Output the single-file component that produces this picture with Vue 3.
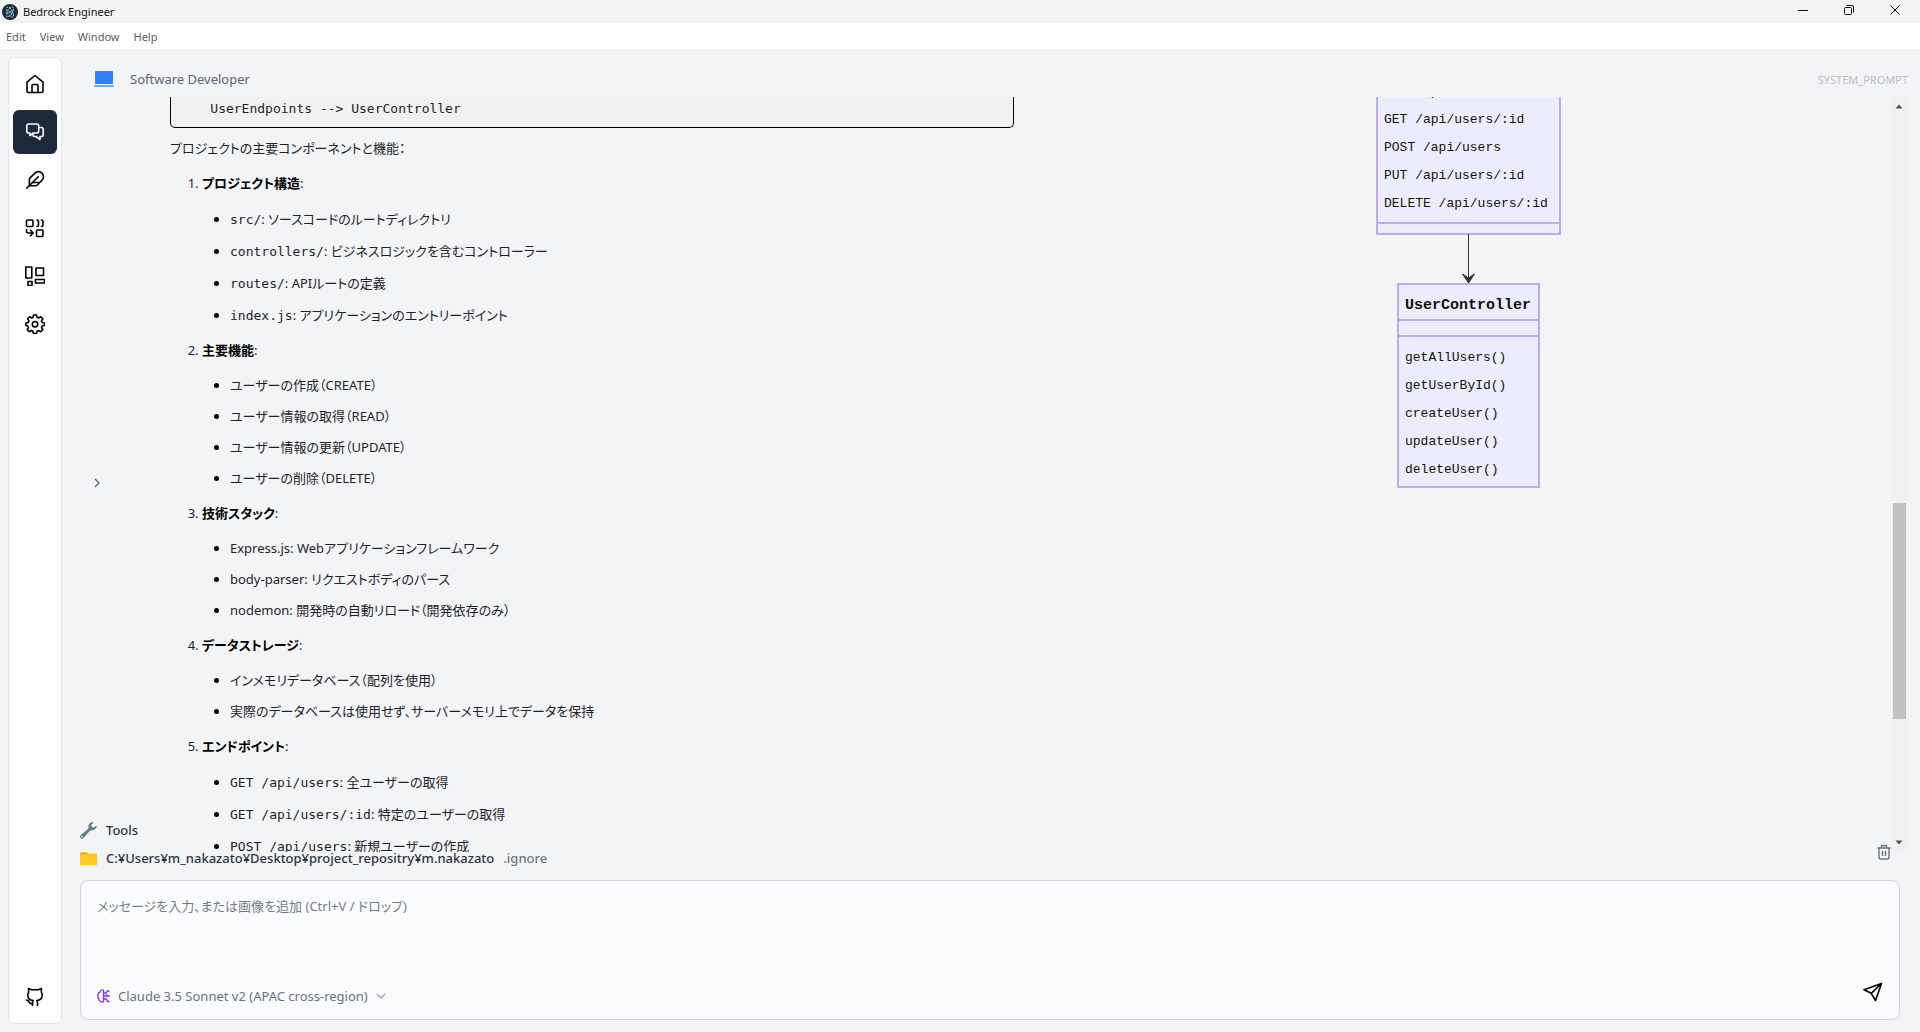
<template>
  <div class="window">
    <!-- title bar -->
    <header class="titlebar">
      <svg class="app-icon" viewBox="0 0 16 16">
        <circle cx="8" cy="8" r="8" fill="#1f2b3a" />
        <g fill="none" stroke="#9fd8e8" stroke-width="1" stroke-dasharray="2 1">
          <ellipse cx="8" cy="8" rx="2.4" ry="5.6" transform="rotate(30 8 8)" />
          <ellipse cx="8" cy="8" rx="2.4" ry="5.6" transform="rotate(-30 8 8)" />
        </g>
        <circle cx="8" cy="8" r="1" fill="#9fd8e8" />
      </svg>
      <span class="app-name">Bedrock Engineer</span>
      <div class="window-buttons">
        <button aria-label="Minimize">
          <svg viewBox="0 0 12 12"><path d="M1 6.5h10" /></svg>
        </button>
        <button aria-label="Restore">
          <svg viewBox="0 0 12 12">
            <rect x="1.5" y="3.5" width="7" height="7" rx="1" />
            <path d="M3.5 1.5h5.5a1.5 1.5 0 0 1 1.5 1.5v5.5" />
          </svg>
        </button>
        <button aria-label="Close">
          <svg viewBox="0 0 12 12"><path d="M1.5 1.5l9 9M10.5 1.5l-9 9" /></svg>
        </button>
      </div>
    </header>

    <nav class="menubar">
      <a v-for="item in menus" :key="item" href="#">{{ item }}</a>
    </nav>

    <div class="body">
      <!-- side navigation -->
      <aside class="sidebar">
        <button
          v-for="item in navItems"
          :key="item.name"
          class="nav-button"
          :class="{ active: item.name === current, last: item.name === 'github' }"
          :aria-label="item.name"
          @click="current = item.name"
        >
          <svg viewBox="0 0 20 20">
            <path v-for="d in item.paths" :key="d" :d="d" />
          </svg>
        </button>
      </aside>

      <main class="main">
        <div class="agent-bar">
          <button class="agent">
            <svg viewBox="0 0 20 16">
              <rect x="1" y="0" width="18" height="13" rx="1" fill="#2b7fff" />
              <rect x="0" y="14" width="20" height="2" rx="1" fill="#6ea6ff" />
            </svg>
            Software Developer
          </button>
          <button class="system-prompt">SYSTEM_PROMPT</button>
        </div>

        <div class="chat">
          <button class="history-toggle" aria-label="History">
            <svg viewBox="0 0 12 12"><path d="M4 2l4 4-4 4" /></svg>
          </button>

          <div class="columns">
            <article class="message">
              <pre><code>    UserEndpoints --&gt; UserController</code></pre>
              <p>プロジェクトの主要コンポーネントと機能：</p>
              <ol>
                <li v-for="section in sections" :key="section.title">
                  <strong>{{ section.title }}</strong>:
                  <ul>
                    <li
                      v-for="row in section.rows"
                      :key="row.code + row.text"
                      :class="{ 'with-code': row.code }"
                    ><code v-if="row.code">{{ row.code }}</code>{{ row.text }}</li>
                  </ul>
                </li>
              </ol>
            </article>

            <!-- class diagram -->
            <div class="preview">
              <svg class="diagram" viewBox="0 0 189 400">
                <rect class="node" x="3" y="-60" width="183" height="197" />
                <path class="divider" d="M3 126h183" />
                <text v-for="(t, i) in endpoints" :key="t" x="10" :y="i * 28 - 2">{{ t }}</text>
                <path class="edge" d="M94.5 137v46" />
                <path class="arrow" d="M88.5 177l6 9 6-9-6 4z" />
                <rect class="node" x="24" y="187" width="141" height="203" />
                <path class="divider" d="M24 223h141M24 239h141" />
                <text class="node-title" x="31" y="212">UserController</text>
                <text v-for="(t, i) in methods" :key="t" x="31" :y="264 + i * 28">{{ t }}</text>
              </svg>
            </div>
          </div>

          <div class="scrollbar">
            <svg viewBox="0 0 18 18"><path d="M5.5 11.5l3.5-4 3.500 4z" /></svg>
            <div class="track">
              <div class="thumb" :style="{ top: scroll.top + '%', height: scroll.size + '%' }"></div>
            </div>
            <svg viewBox="0 0 18 18"><path d="M5.5 6.5l3.5 4 3.500-4z" /></svg>
          </div>
        </div>

        <footer class="composer">
          <div class="status">
            <div class="status-rows">
              <button class="status-row">
                <svg viewBox="0 0 16 16">
                  <path
                    d="M15.6 3.6l-2.8 1.6-1.8-.6-.4-1.8L12.8.5C10.6-.2 8 1.4 7.9 4c0 .8.1 1.3.3 1.8L.8 12.400c-.9.9-.9 1.9-.2 2.700.8.8 1.9.8 2.7-.1l6.400-7.300c2.500 1 5.900-.6 5.900-4.100zM2 14.700a.8.8 0 1 1 .1-1.600.8.8 0 0 1-.1 1.600z"
                    fill="#607d8b"
                  />
                </svg>
                Tools
              </button>
              <div class="status-row">
                <svg viewBox="0 0 16 16">
                  <path d="M1.5 2h4.5l1.5 1.5h7A1.5 1.5 0 0 1 16 5v7.5a1.5 1.5 0 0 1-1.5 1.5h-13A1.5 1.5 0 0 1 0 12.5v-9A1.5 1.5 0 0 1 1.5 2z" fill="#ffa000" />
                  <rect x="0" y="4" width="16" height="10" rx="1" fill="#ffca28" />
                </svg>
                <a href="#" class="path">C:¥Users¥m_nakazato¥Desktop¥project_repositry¥m.nakazato</a>
                <a href="#" class="ignore">.ignore</a>
              </div>
            </div>
            <button class="trash" aria-label="Clear chat">
              <svg viewBox="0 0 16 16">
                <path d="M1.5 4h13M5.5 4V1.5h5V4M3 4v9.5a1.5 1.5 0 0 0 1.5 1.5h7a1.5 1.5 0 0 0 1.5-1.5V4M6.5 7v5M9.5 7v5" />
              </svg>
            </button>
          </div>

          <form class="input-card" @submit.prevent>
            <textarea
              v-model="message"
              aria-label="Message"
              placeholder="メッセージを入力、または画像を追加 (Ctrl+V / ドロップ)"
            ></textarea>
            <div class="input-actions">
              <button type="button" class="model">
                <svg class="brain" viewBox="0 0 14 14">
                  <path d="M6.5 1v12M6.5 1C4.500.5 3.200 1.500 3 3 1.500 3.500 1 4.500 1.200 6c-.7 1.500-.4 3 .6 3.800C1.800 12 4 13.500 6.500 13M6.500 4h2.500l1.500-2h2M6.500 7h6.500M6.500 10h3l1 2.500h2M9.500 7V5" />
                </svg>
                Claude 3.5 Sonnet v2 (APAC cross-region)
                <svg class="chevron" viewBox="0 0 12 12"><path d="M2 4l4 4 4-4" /></svg>
              </button>
              <button class="send" aria-label="Send">
                <svg viewBox="0 0 20 20">
                  <path d="M18.5 1.5L1 7.800l7.200 3.500 4.300 7.200zM18.500 1.500L8.200 11.300" />
                </svg>
              </button>
            </div>
          </form>
        </footer>
      </main>
    </div>
  </div>
</template>

<script setup>
import { ref } from "vue";

const menus = ["Edit", "View", "Window", "Help"];

const current = ref("chat");
const message = ref("");

// thumb position and size, percent of the track
const scroll = { top: 54, size: 30 };

const navItems = [
  {
    name: "home",
    paths: [
      "M2 8.2L10 1.5l8 6.7v8.8a1.5 1.5 0 0 1-1.5 1.5h-13A1.5 1.5 0 0 1 2 17z",
      "M7 18.5v-7a1 1 0 0 1 1-1h4a1 1 0 0 1 1 1v7",
    ],
  },
  {
    name: "chat",
    paths: [
      "M3.5 2h8.5a1.7 1.7 0 0 1 1.7 1.7v5.6A1.7 1.7 0 0 1 12 11H8.5L5 13.5V11H3.5a1.7 1.7 0 0 1-1.7-1.7V3.7A1.7 1.7 0 0 1 3.5 2z",
      "M14 5.5h2.5a1.7 1.7 0 0 1 1.7 1.7v5.6a1.7 1.7 0 0 1-1.7 1.7H15V17.5L11 14.5H9.5a1.5 1.5 0 0 1-1.5-1.5v-1.5",
    ],
  },
  {
    name: "write",
    paths: [
      "M10.8 15.8a1.7 1.7 0 0 0 1.2-.5l5-5.1a5 5 0 0 0-7.1-7.1l-5 5a1.7 1.7 0 0 0-.5 1.2v6.5z",
      "M13.3 6.7L1.7 18.3",
      "M14.5 12.5H7.5",
    ],
  },
  {
    name: "generator",
    paths: [
      "M2.5 2h4.5a1 1 0 0 1 1 1v4.5a1 1 0 0 1-1 1H2.5a1 1 0 0 1-1-1V3a1 1 0 0 1 1-1z",
      "M12 2c1.3 0 1.5.5 1.5 1.5v3.5c0 1-.2 1.5-1.5 1.5",
      "M16.5 2c1.3 0 1.5.5 1.5 1.5v3.5c0 1-.2 1.5-1.5 1.5",
      "M12.5 12h4.5a1 1 0 0 1 1 1v4.5a1 1 0 0 1-1 1h-4.5a1 1 0 0 1-1-1V13a1 1 0 0 1 1-1z",
      "M1.5 11.5v1.5a2 2 0 0 0 2 2H8M5.5 12.2L8.2 15l-2.7 2.8",
    ],
  },
  {
    name: "diagram",
    paths: [
      "M.8 1h6v11h-6z",
      "M11 2h7.5v7.5H11z",
      "M3 15.5h4v4H3z",
      "M10.5 13.5h9v3.5h-9z",
    ],
  },
  {
    name: "settings",
    paths: [
      "M8.5 1h3l.6 2.3 1.5.7 2.1-1.300 2.100 2.100-1.300 2.100.7 1.500 2.300.6v2.500l-2.300.6-.7 1.500 1.300 2.100-2.100 2.100-2.100-1.300-1.500.7-.6 2.300h-3l-.6-2.300-1.500-.7-2.100 1.300-2.100-2.100 1.300-2.100-.7-1.500L.9 11.500V9l2.300-.6.7-1.500-1.300-2.100 2.100-2.100L6.800 4l1.300-.7z",
      "M10 7.500a2.700 2.700 0 1 0 0 5.400 2.700 2.700 0 1 0 0-5.400z",
    ],
  },
  {
    name: "github",
    paths: [
      "M7.500 18.500v-3.500l.7-1.500C5 13.200 2.800 11.500 2.800 8c0-1.200.3-2 .9-2.800L3.500 1.500l3.200 1.300h6.600l3.200-1.300-.2 3.700c.6.8.9 1.600.9 2.800 0 3.500-2.200 5.200-5.400 5.500l.7 1.500v3.500",
      "M7.500 16.500H5.200L3.500 14 1.500 13",
    ],
  },
];

const sections = [
  {
    title: "プロジェクト構造",
    rows: [
      { code: "src/", text: ": ソースコードのルートディレクトリ" },
      { code: "controllers/", text: ": ビジネスロジックを含むコントローラー" },
      { code: "routes/", text: ": APIルートの定義" },
      { code: "index.js", text: ": アプリケーションのエントリーポイント" },
    ],
  },
  {
    title: "主要機能",
    rows: [
      { code: "", text: "ユーザーの作成（CREATE）" },
      { code: "", text: "ユーザー情報の取得（READ）" },
      { code: "", text: "ユーザー情報の更新（UPDATE）" },
      { code: "", text: "ユーザーの削除（DELETE）" },
    ],
  },
  {
    title: "技術スタック",
    rows: [
      { code: "", text: "Express.js: Webアプリケーションフレームワーク" },
      { code: "", text: "body-parser: リクエストボディのパース" },
      { code: "", text: "nodemon: 開発時の自動リロード（開発依存のみ）" },
    ],
  },
  {
    title: "データストレージ",
    rows: [
      { code: "", text: "インメモリデータベース（配列を使用）" },
      { code: "", text: "実際のデータベースは使用せず、サーバーメモリ上でデータを保持" },
    ],
  },
  {
    title: "エンドポイント",
    rows: [
      { code: "GET /api/users", text: ": 全ユーザーの取得" },
      { code: "GET /api/users/:id", text: ": 特定のユーザーの取得" },
      { code: "POST /api/users", text: ": 新規ユーザーの作成" },
    ],
  },
];

const endpoints = [
  "GET /api/users",
  "GET /api/users/:id",
  "POST /api/users",
  "PUT /api/users/:id",
  "DELETE /api/users/:id",
];

const methods = ["getAllUsers()", "getUserById()", "createUser()", "updateUser()", "deleteUser()"];
</script>

<style>
body {
  background: #f3f4f6;
}
</style>

<style scoped>
.window {
  display: flex;
  flex-direction: column;
  height: 100vh;
  overflow: hidden;
  background: #f3f4f6;
  color: #1f2329;
  font-family: "Noto Sans", "Noto Sans CJK JP", sans-serif;
  font-size: 13px;
}

* {
  box-sizing: border-box;
}

button {
  display: flex;
  align-items: center;
  padding: 0;
  border: none;
  background: none;
  color: inherit;
  font: inherit;
  cursor: pointer;
}

a {
  color: inherit;
  text-decoration: none;
}

svg {
  display: block;
  flex: none;
}

/* title bar and menu */
.titlebar {
  display: flex;
  align-items: center;
  flex: none;
  height: 23px;
  padding-left: 2px;
  background: #f3f3f3;
  color: #111;
  font-size: 11px;
}

.app-icon {
  width: 16px;
  height: 16px;
  margin-right: 5px;
}

.window-buttons {
  display: flex;
  align-self: flex-start;
  margin: 0 2px 0 auto;
}

.window-buttons button {
  justify-content: center;
  width: 46px;
  height: 20px;
}

.window-buttons svg {
  width: 12px;
  height: 12px;
  fill: none;
  stroke: #111;
}

.menubar {
  display: flex;
  align-items: center;
  flex: none;
  gap: 14px;
  height: 26px;
  padding-left: 6px;
  background: #fff;
  color: #5c5c5c;
  font-size: 11px;
}

.body {
  display: flex;
  flex: 1;
  min-height: 0;
  padding: 8px 12px 8px 8px;
}

/* side navigation */
.sidebar {
  display: flex;
  flex-direction: column;
  flex: none;
  gap: 4px;
  width: 54px;
  padding: 4px;
  border: 1px solid #e3e6ea;
  border-radius: 6px;
  background: #fdfdfe;
}

.nav-button {
  justify-content: center;
  width: 44px;
  height: 44px;
  border-radius: 6px;
  color: #000;
}

.nav-button svg {
  width: 20px;
  height: 20px;
  fill: none;
  stroke: currentColor;
  stroke-width: 1.6;
  stroke-linecap: round;
  stroke-linejoin: round;
}

.nav-button.active {
  background: #1e2939;
  color: #fff;
}

.nav-button.last {
  margin-top: auto;
}

/* main area */
.main {
  display: flex;
  flex-direction: column;
  flex: 1;
  min-width: 0;
  padding: 0 0 4px 18px;
}

.agent-bar {
  display: flex;
  align-items: center;
  justify-content: space-between;
  flex: none;
  height: 40px;
  padding: 4px 0 0 14px;
}

.agent {
  gap: 16px;
  color: #5b6573;
}

.agent svg {
  width: 20px;
  height: 16px;
}

.system-prompt {
  color: #b9bfc9;
  font-size: 11px;
}

.chat {
  display: flex;
  flex: 1;
  min-height: 0;
  overflow: hidden;
}

.history-toggle {
  justify-content: center;
  flex: none;
  width: 34px;
  padding-top: 16px;
}

.history-toggle svg {
  width: 12px;
  height: 12px;
  fill: none;
  stroke: #5b6573;
  stroke-width: 1.3;
}

.columns {
  display: grid;
  grid-template-columns: 1fr 1fr;
  gap: 32px;
  flex: 1;
  min-width: 0;
  padding-left: 56px;
}

/* message */
.message {
  color: #1f2329;
  line-height: 23px;
  font-feature-settings: "palt";
}

pre {
  height: 31px;
  margin: 0;
  padding: 0 8px;
  border: 1px solid #000;
  border-top: none;
  border-radius: 0 0 5px 5px;
  background: #f1f1f1;
}

code {
  font-family: "DejaVu Sans Mono", monospace;
  font-size: 13px;
  line-height: 16px;
}

p {
  margin: 9px 0 12px;
}

ol {
  margin: 0;
  padding-left: 32px;
}

ol strong {
  color: #000;
  font-weight: 600;
}

ul {
  margin: 8px 0;
  padding-left: 28px;
  list-style: disc;
}

ul li {
  line-height: 31px;
}

ul li.with-code {
  line-height: 32px;
}

ul li::marker {
  color: #000;
}

/* class diagram */
.preview {
  display: flex;
  justify-content: center;
}

.diagram {
  width: 189px;
  height: 400px;
}

.node {
  fill: #ececff;
  stroke: #bbabec;
  stroke-width: 2;
}

.divider {
  fill: none;
  stroke: #bbabec;
  stroke-width: 2;
}

.edge {
  stroke: #333;
}

.arrow {
  fill: #333;
  stroke: #333;
}

.diagram text {
  fill: #131300;
  font-family: "Liberation Mono", monospace;
  font-size: 13px;
}

.diagram .node-title {
  font-size: 15px;
  font-weight: 700;
}

/* scrollbar */
.scrollbar {
  display: flex;
  flex-direction: column;
  flex: none;
  width: 18px;
  background: #f1f1f1;
}

.scrollbar svg {
  width: 18px;
  height: 18px;
  fill: #505050;
}

.track {
  position: relative;
  flex: 1;
}

.thumb {
  position: absolute;
  left: 3px;
  right: 2px;
  background: #c1c1c1;
}

/* composer */
.composer {
  position: relative;
  flex: none;
  margin: -36px 8px 0 0;
}

.status {
  display: flex;
  align-items: flex-end;
  justify-content: space-between;
  height: 64px;
  padding: 0 8px 8px 0;
}

.status-row {
  display: flex;
  align-items: center;
  gap: 9px;
  height: 28px;
  color: #2b3340;
  font-weight: 500;
}

.status-row svg {
  width: 17px;
  height: 17px;
}

.ignore {
  color: #6b7280;
}

.trash {
  height: 40px;
}

.trash svg {
  width: 16px;
  height: 16px;
  fill: none;
  stroke: #6b7280;
  stroke-width: 1.4;
}

.input-card {
  display: flex;
  flex-direction: column;
  height: 140px;
  padding: 13px 16px 7px;
  border: 1px solid #d1d5db;
  border-radius: 8px;
  background: #fafbfd;
}

textarea {
  flex: 1;
  padding: 0;
  border: none;
  outline: none;
  background: none;
  color: #1f2329;
  font: inherit;
  line-height: 24px;
  font-feature-settings: "palt";
  resize: none;
}

textarea::placeholder {
  color: #757b86;
}

.input-actions {
  display: flex;
  align-items: center;
  justify-content: space-between;
  height: 32px;
}

.model {
  gap: 7px;
  color: #6b7280;
}

.model svg {
  fill: none;
  stroke-width: 1.4;
}

.brain {
  width: 14px;
  height: 14px;
  stroke: #7c3aed;
}

.chevron {
  width: 12px;
  height: 12px;
  stroke: #9ca3af;
}

.send {
  align-self: flex-start;
  height: 24px;
}

.send svg {
  width: 20px;
  height: 20px;
  fill: none;
  stroke: #000;
  stroke-width: 1.6;
  stroke-linejoin: round;
}
</style>
